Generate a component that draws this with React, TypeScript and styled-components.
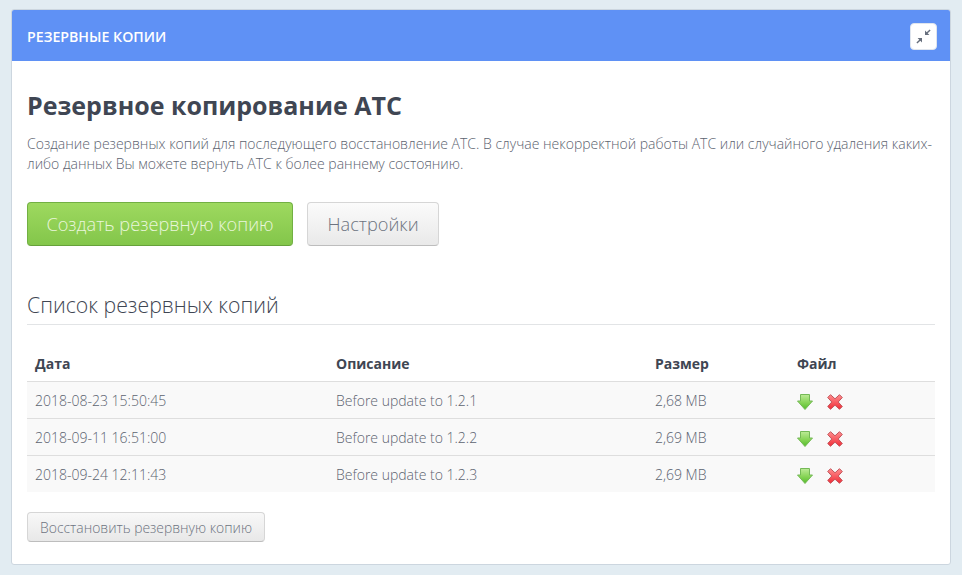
import React from "react";
import styled, { createGlobalStyle } from "styled-components";

const GlobalStyle = createGlobalStyle`
  html, body {
    margin: 0;
    padding: 0;
    background: #e2ecf2;
    font-family: "Open Sans", sans-serif;
    color: #6d7380;
  }
`;

const Page = styled.div`
  padding: 9px 11px 10px;
  height: 575px;
  box-sizing: border-box;
  overflow: hidden;
`;

const Panel = styled.section`
  background: #fff;
  border: 1px solid #ccd6df;
  border-radius: 3px;
  height: 556px;
  box-sizing: border-box;
`;

const PanelHeader = styled.header`
  height: 51px;
  box-sizing: border-box;
  background: #5f91f5;
  display: flex;
  align-items: center;
  justify-content: space-between;
  padding: 2px 13px 0 15px;
  border-radius: 2px 2px 0 0;
`;

const PanelTitle = styled.h2`
  margin: 0;
  font-size: 14.2px;
  font-weight: 600;
  color: #fff;
`;

const IconButton = styled.button`
  width: 27px;
  height: 27px;
  padding: 0;
  background: #fff;
  border: 1px solid #dfe5ee;
  border-radius: 4px;
  display: flex;
  align-items: center;
  justify-content: center;
`;

const PanelBody = styled.div`
  padding: 28px 15px 0;
`;

const Heading = styled.h1`
  margin: 0;
  font-size: 25px;
  line-height: 33px;
  font-weight: 700;
  color: #3f4653;
`;

const Intro = styled.p`
  margin: 12px 0 0;
  font-size: 14px;
  line-height: 20px;
  font-weight: 300;
  color: #5c6370;
`;

const Actions = styled.div`
  display: flex;
  gap: 14px;
  margin-top: 28px;
`;

const BigButton = styled.button<{ $primary?: boolean }>`
  height: 44px;
  width: ${(p) => (p.$primary ? "266px" : "132px")};
  padding: 0;
  font-family: inherit;
  font-size: 18.2px;
  font-weight: 300;
  border-radius: 4px;
  border: 1px solid ${(p) => (p.$primary ? "#72b043" : "#d6d6d6")};
  border-bottom-color: ${(p) => (p.$primary ? "#66a13a" : "#bdbdbd")};
  color: ${(p) => (p.$primary ? "#e9f6dc" : "#6d7380")};
  background: ${(p) =>
    p.$primary
      ? "linear-gradient(#9ed95f, #83c64a)"
      : "linear-gradient(#fbfbfb, #e9e9e9)"};
`;

const SectionTitle = styled.h3`
  margin: 45px 0 0;
  padding-bottom: 6px;
  border-bottom: 1px solid #e2e4e6;
  font-size: 21.25px;
  line-height: 27px;
  font-weight: 300;
  color: #3f4653;
`;

const Table = styled.table`
  width: 100%;
  margin-top: 20px;
  border-collapse: collapse;
  table-layout: fixed;
  font-size: 14px;
`;

const Th = styled.th<{ $width: number }>`
  width: ${(p) => p.$width}px;
  height: 36px;
  padding: 2px 8px 0;
  box-sizing: border-box;
  text-align: left;
  font-weight: 700;
  color: #3f4653;
`;

const Row = styled.tr`
  background: #f9f9f9;
  border-top: 1px solid #dedede;
`;

const Td = styled.td`
  height: 37px;
  padding: 2px 8px 0;
  box-sizing: border-box;
  font-weight: 300;
  color: #5c6370;
`;

const FileIcons = styled.div`
  display: flex;
  align-items: center;
  gap: 14px;
  padding-top: 2px;
`;

const RestoreButton = styled.button`
  display: block;
  width: 238px;
  height: 30px;
  margin-top: 20px;
  padding: 0;
  font-family: inherit;
  font-size: 13.9px;
  font-weight: 300;
  color: #6d7380;
  background: linear-gradient(#f8f8f8, #e8e8e8);
  border: 1px solid #d6d6d6;
  border-bottom-color: #bdbdbd;
  border-radius: 4px;
`;

const CollapseIcon = () => (
  <svg width="15" height="15" viewBox="0 0 15 15" fill="#666e7c">
    <path d="M9 6V1.600L10.700 3.300 13.600.4l1 1-2.900 2.900L13.400 6z" />
    <path d="M6 9v4.400L4.300 11.700 1.400 14.600l-1-1 2.900-2.900L1.600 9z" />
  </svg>
);

const DownloadIcon = () => (
  <svg width="16" height="16" viewBox="0 0 16 16">
    <defs>
      <linearGradient id="arrowFill" x1="0" y1="0" x2="0" y2="1">
        <stop offset="0" stopColor="#bdeb97" />
        <stop offset="0.55" stopColor="#86d455" />
        <stop offset="1" stopColor="#54bb2c" />
      </linearGradient>
    </defs>
    <path
      d="M3.500.5h9v6.500h3L8 15.500.5 7h3z"
      fill="url(#arrowFill)"
      stroke="#74b956"
      strokeWidth="1"
      strokeLinejoin="round"
    />
  </svg>
);

const DeleteIcon = () => (
  <svg width="16" height="16" viewBox="0 0 16 16">
    <defs>
      <linearGradient id="crossFill" x1="0" y1="0" x2="0" y2="1">
        <stop offset="0" stopColor="#ff8f90" />
        <stop offset="1" stopColor="#f02c37" />
      </linearGradient>
    </defs>
    <path
      d="M3.500.7 8 4.800 12.500.7l2.800 2.800L11.200 8l4.100 4.500-2.800 2.800L8 11.200l-4.500 4.100-2.800-2.800L4.800 8 .7 3.500z"
      fill="url(#crossFill)"
      stroke="#c2545b"
      strokeWidth="1"
      strokeLinejoin="round"
    />
  </svg>
);

const backups = [
  { date: "2018-08-23 15:50:45", note: "Before update to 1.2.1", size: "2,68 MB" },
  { date: "2018-09-11 16:51:00", note: "Before update to 1.2.2", size: "2,69 MB" },
  { date: "2018-09-24 12:11:43", note: "Before update to 1.2.3", size: "2,69 MB" },
];

export default function App() {
  return (
    <Page>
      <GlobalStyle />
      <Panel>
        <PanelHeader>
          <PanelTitle>РЕЗЕРВНЫЕ КОПИИ</PanelTitle>
          <IconButton aria-label="Свернуть">
            <CollapseIcon />
          </IconButton>
        </PanelHeader>
        <PanelBody>
          <Heading>Резервное копирование АТС</Heading>
          <Intro>
            Создание резервных копий для последующего восстановление АТС. В случае некорректной работы АТС или случайного удаления каких-либо данных Вы можете вернуть АТС к более раннему состоянию.
          </Intro>
          <Actions>
            <BigButton $primary>Создать резервную копию</BigButton>
            <BigButton>Настройки</BigButton>
          </Actions>
          <SectionTitle>Список резервных копий</SectionTitle>
          <Table>
            <thead>
              <tr>
                <Th $width={301}>Дата</Th>
                <Th $width={319}>Описание</Th>
                <Th $width={142}>Размер</Th>
                <Th $width={146}>Файл</Th>
              </tr>
            </thead>
            <tbody>
              {backups.map((b) => (
                <Row key={b.date}>
                  <Td>{b.date}</Td>
                  <Td>{b.note}</Td>
                  <Td>{b.size}</Td>
                  <Td>
                    <FileIcons>
                      <DownloadIcon />
                      <DeleteIcon />
                    </FileIcons>
                  </Td>
                </Row>
              ))}
            </tbody>
          </Table>
          <RestoreButton>Восстановить резервную копию</RestoreButton>
        </PanelBody>
      </Panel>
    </Page>
  );
}
